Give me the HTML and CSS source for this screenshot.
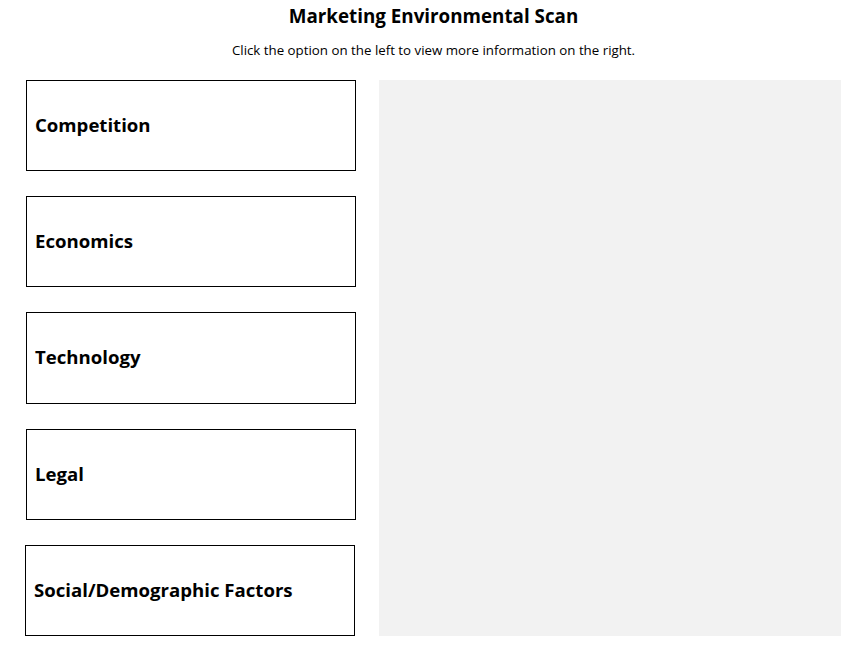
FILE: index.html
```html
<!DOCTYPE html>
<html>
<head>
<meta charset="utf-8">
<link rel="stylesheet" href="styles.css">
</head>
<body>
<header class="head">
  <h1 class="title">Marketing Environmental Scan</h1>
  <p class="sub">Click the option on the left to view more information on the right.</p>
</header>
<main class="layout">
  <div class="options">
    <div class="opt">Competition</div>
    <div class="opt">Economics</div>
    <div class="opt">Technology</div>
    <div class="opt">Legal</div>
    <div class="opt opt-last">Social/Demographic Factors</div>
  </div>
  <div class="panel"></div>
</main>
</body>
</html>
```
FILE: styles.css
```css
html, body { margin: 0; padding: 0; background: #fff; }
body { font-family: "Open Sans", "Noto Sans", sans-serif; color: #000; }
.head { text-align: center; padding-top: 3px; }
.title { font-size: 18.8px; font-weight: 700; margin: 0; line-height: 26px; }
.sub { font-size: 13.3px; margin: 12px 0 0; line-height: 18px; }
.layout { display: flex; gap: 23px; padding: 0 26px; margin-top: 21px; }
.options { width: 330px; display: flex; flex-direction: column; gap: 25px; }
.opt { box-sizing: border-box; height: 91.2px; border: 1px solid #000; display: flex; align-items: center; padding: 0 0 2px 8px; font-size: 18.6px; font-weight: 700; }
.opt-last { margin-left: -1px; margin-right: 1px; }
.panel { flex: 1; background: #f2f2f2; height: 556px; }
```
